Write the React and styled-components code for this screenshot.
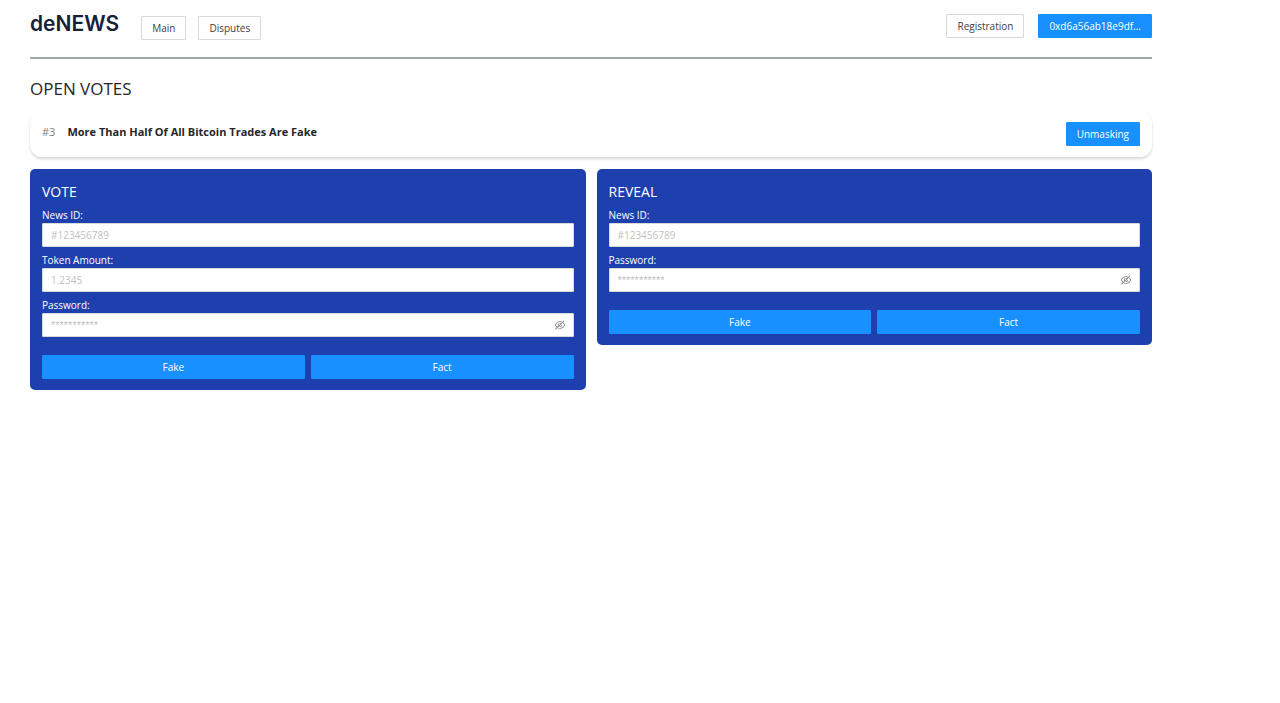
import React, { useState } from 'react';
import styled, { createGlobalStyle } from 'styled-components';
import { AiOutlineEye, AiOutlineEyeInvisible } from 'react-icons/ai';

const GlobalStyle = createGlobalStyle`
  * {
    box-sizing: border-box;
  }

  body {
    margin: 0;
    background-color: #fff;
    color: #262626;
    font-family: 'Open Sans', 'Noto Sans', sans-serif;
    font-size: 10px;
    line-height: 16px;
  }
`;

const Page = styled.div`
  padding: 0 128px 0 30px;
`;

const Header = styled.header`
  display: flex;
  align-items: flex-start;
  justify-content: space-between;
  padding: 14px 0 17px;
  border-bottom: 2px solid #a0a5ae;
`;

const Left = styled.div`
  display: flex;
  align-items: flex-start;
`;

const Logo = styled.a`
  margin-right: 22px;
  color: #17203a;
  font-family: Inter, sans-serif;
  font-size: 21px;
  font-weight: 600;
  line-height: 20px;
  text-decoration: none;
`;

const Nav = styled.nav`
  display: flex;
  gap: 12px;
  padding-top: 2px;
`;

const Account = styled.div`
  display: flex;
  gap: 14px;
`;

const Button = styled.button`
  height: 24px;
  padding: 0 10px;
  border: 1px solid ${props => (props.$primary ? '#1890ff' : '#d9d9d9')};
  border-radius: 1px;
  background-color: ${props => (props.$primary ? '#1890ff' : '#fff')};
  color: ${props => (props.$primary ? '#fff' : '#404040')};
  font-family: inherit;
  font-size: 10px;
  line-height: 16px;
  cursor: pointer;
`;

const Title = styled.h1`
  margin: 18px 0 10px;
  font-size: 17px;
  font-weight: 500;
  line-height: 24px;
`;

const NewsCard = styled.article`
  display: flex;
  align-items: flex-start;
  margin-bottom: 12px;
  padding: 11px 12px;
  border-radius: 12px;
  background-color: #fff;
  box-shadow: 0 2px 3px rgba(0, 0, 0, 0.16);
`;

const NewsId = styled.span`
  margin-right: 12px;
  color: #808080;
  font-size: 11px;
  line-height: 20px;
`;

const NewsTitle = styled.h2`
  flex: 1;
  margin: 0;
  font-size: 11px;
  font-weight: 700;
  line-height: 20px;
`;

const Panels = styled.div`
  display: grid;
  grid-template-columns: 1fr 1fr;
  align-items: start;
  gap: 11px;
`;

const Panel = styled.form`
  padding: 12px 12px 11px;
  border-radius: 5px;
  background-color: #1e40af;
  color: #fff;
`;

const PanelTitle = styled.h2`
  margin: 0 0 4px;
  font-size: 14px;
  font-weight: 400;
  line-height: 22px;
`;

const Field = styled.div`
  margin-bottom: 5px;
`;

const Label = styled.label`
  display: block;
`;

const InputBox = styled.div`
  display: flex;
  align-items: center;
  height: 24px;
  padding: 0 7px 0 8px;
  border: 1px solid #d9d9d9;
  border-radius: 1px;
  background-color: #fff;
`;

const Input = styled.input`
  flex: 1;
  min-width: 0;
  padding: 0;
  border: 0;
  outline: 0;
  background-color: transparent;
  color: #262626;
  font-family: inherit;
  font-size: 10px;
  line-height: 16px;

  &::placeholder {
    color: #bfbfbf;
  }
`;

const PasswordInput = styled(Input)`
  font-family: 'Liberation Sans', sans-serif;
  font-size: 11px;
`;

const Toggle = styled.button`
  display: flex;
  padding: 0;
  border: 0;
  background-color: transparent;
  color: #808080;
  font-size: 12px;
  cursor: pointer;
`;

const Actions = styled.div`
  display: grid;
  grid-template-columns: 1fr 1fr;
  gap: 6px;
  margin-top: 18px;
`;

const TextField = ({ id, label, placeholder }) => (
  <Field>
    <Label htmlFor={id}>{label}</Label>
    <InputBox>
      <Input id={id} type="text" placeholder={placeholder} />
    </InputBox>
  </Field>
);

const PasswordField = ({ id }) => {
  const [visible, setVisible] = useState(false);

  return (
    <Field>
      <Label htmlFor={id}>Password:</Label>
      <InputBox>
        <PasswordInput id={id} type={visible ? 'text' : 'password'} placeholder="***********" />
        <Toggle
          type="button"
          aria-label={visible ? 'Hide password' : 'Show password'}
          onClick={() => setVisible(!visible)}
        >
          {visible ? <AiOutlineEye /> : <AiOutlineEyeInvisible />}
        </Toggle>
      </InputBox>
    </Field>
  );
};

const VerdictButtons = () => (
  <Actions>
    <Button type="button" $primary>Fake</Button>
    <Button type="button" $primary>Fact</Button>
  </Actions>
);

const App = () => (
  <>
    <GlobalStyle />
    <Page>
      <Header>
        <Left>
          <Logo href="#">deNEWS</Logo>
          <Nav>
            <Button type="button">Main</Button>
            <Button type="button">Disputes</Button>
          </Nav>
        </Left>
        <Account>
          <Button type="button">Registration</Button>
          <Button type="button" $primary>0xd6a56ab18e9df...</Button>
        </Account>
      </Header>
      <main>
        <Title>OPEN VOTES</Title>
        <NewsCard>
          <NewsId>#3</NewsId>
          <NewsTitle>More Than Half Of All Bitcoin Trades Are Fake</NewsTitle>
          <Button type="button" $primary>Unmasking</Button>
        </NewsCard>
        <Panels>
          <Panel>
            <PanelTitle>VOTE</PanelTitle>
            <TextField id="vote-news" label="News ID:" placeholder="#123456789" />
            <TextField id="vote-amount" label="Token Amount:" placeholder="1.2345" />
            <PasswordField id="vote-password" />
            <VerdictButtons />
          </Panel>
          <Panel>
            <PanelTitle>REVEAL</PanelTitle>
            <TextField id="reveal-news" label="News ID:" placeholder="#123456789" />
            <PasswordField id="reveal-password" />
            <VerdictButtons />
          </Panel>
        </Panels>
      </main>
    </Page>
  </>
);

export default App;
